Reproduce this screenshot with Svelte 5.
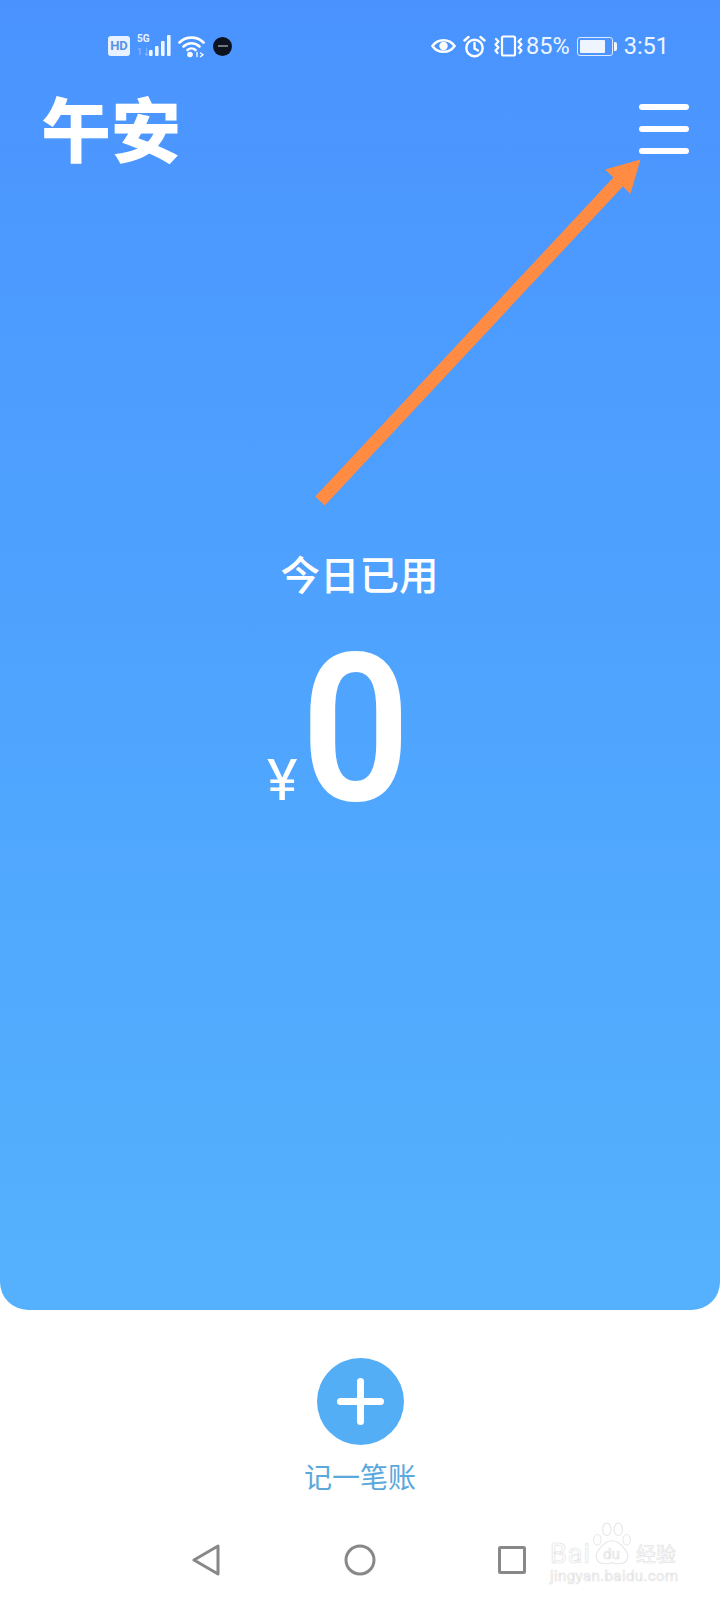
<script>
  const bars = [
    { x: 0, y: 15, h: 6 },
    { x: 6, y: 11, h: 10 },
    { x: 12, y: 6, h: 15 },
    { x: 18, y: 0, h: 21 }
  ];
</script>

<div class="page">
  <section class="hero">
    <div class="status">
      <div class="status-left">
        <span class="hd">HD</span>
        <div class="signal">
          <span class="net">5G</span>
          <span class="sim">1↓</span>
          <svg class="bars" width="22" height="21" viewBox="0 0 22 21">
            {#each bars as b}
              <rect x={b.x} y={b.y} width="3.6" height={b.h} rx="1" fill="#fff" opacity="0.92" />
            {/each}
          </svg>
        </div>
        <svg class="wifi" width="27" height="23" viewBox="0 0 27 23" fill="none" stroke="#fff" stroke-width="2.6" stroke-linecap="round">
          <path d="M1.500 7.500C8 1 19 1 25.500 7.500" />
          <path d="M5.500 11.500C10 7.200 17 7.200 21.500 11.500" />
          <path d="M9.500 15C11.800 13 15.200 13 17.500 15" />
          <circle cx="12" cy="19.500" r="2.800" fill="#fff" stroke="none" />
          <path d="M19 17.500v4M22.500 18l2.500 1.800-2.500 1.800" stroke-width="1.300" />
        </svg>
        <span class="dot"><i></i></span>
      </div>
      <div class="status-right">
        <svg class="eye" width="25" height="18" viewBox="0 0 26 18" fill="none" stroke="#fff" stroke-width="2.600">
          <path d="M1.500 9C7 1 19 1 24.500 9 19 17 7 17 1.500 9Z" />
          <circle cx="13" cy="9" r="4.400" fill="#fff" stroke="none" />
        </svg>
        <svg class="alarm" width="23" height="23" viewBox="0 0 23 23" fill="none" stroke="#fff" stroke-width="2.400" stroke-linecap="round">
          <circle cx="11.500" cy="13" r="8.200" />
          <path d="M11.500 8v5.500l3.500 2" />
          <path d="M1.500 5.500 5.500 2M21.500 5.500 17.500 2" />
        </svg>
        <svg class="vibrate" width="31" height="22" viewBox="0 0 31 22" fill="none" stroke="#fff" stroke-width="2.200" stroke-linecap="round" stroke-linejoin="round">
          <rect x="9" y="1.500" width="13" height="19" rx="1.500" />
          <path d="M3 4 5.500 6.500 2.500 9.500 5.500 12.500 2.500 15.500 4.500 18" />
          <path d="M28 4 25.500 6.500 28.500 9.500 25.500 12.500 28.500 15.500 26.500 18" />
        </svg>
        <span class="pct">85%</span>
        <span class="battery"><i></i></span>
        <span class="time">3:51</span>
      </div>
    </div>

    <header class="top">
      <h1>午安</h1>
      <div class="menu"><span></span><span></span><span></span></div>
    </header>

    <div class="today">
      <p>今日已用</p>
      <div class="amount">
        <span class="yen">¥</span>
        <span class="zero">0</span>
      </div>
    </div>

    <!-- annotation drawn on the screenshot -->
    <svg class="arrow" width="340" height="350" viewBox="0 0 340 350">
      <path d="M5 344 L304 24" stroke="#ff8c42" stroke-width="13" fill="none" />
      <path d="M324 4 L315 35 L292 13 Z" fill="#ff8c42" stroke="#ff8c42" stroke-width="2" />
    </svg>
  </section>

  <div class="add">
    <span class="plus"></span>
    <span class="add-label">记一笔账</span>
  </div>

  <nav class="nav">
    <svg width="28" height="32" viewBox="0 0 28 32" fill="none" stroke="#888" stroke-width="3" stroke-linejoin="round">
      <path d="M26 2 V30 L2 16 Z" />
    </svg>
    <svg width="32" height="32" viewBox="0 0 32 32" fill="none" stroke="#888" stroke-width="3">
      <circle cx="16" cy="16" r="14" />
    </svg>
    <svg width="28" height="28" viewBox="0 0 28 28" fill="none" stroke="#888" stroke-width="3" stroke-linejoin="round">
      <rect x="1.500" y="1.500" width="25" height="25" rx="1" />
    </svg>

    <div class="mark">
      <div class="mark-row">
        <span class="bai">Bai</span>
        <svg width="40" height="46" viewBox="0 0 38 44" fill="#fff" stroke="#e6e6e6" stroke-width="1">
          <ellipse cx="5" cy="17" rx="3.500" ry="5" />
          <ellipse cx="14" cy="7" rx="4" ry="6" />
          <ellipse cx="25" cy="7" rx="4" ry="6" />
          <ellipse cx="33" cy="17" rx="3.500" ry="5" />
          <path d="M19 18C12 18 3 28 4 34 5 40 12 41 19 39 26 41 33 40 34 34 35 28 26 18 19 18Z" />
        </svg>
        <span class="du">du</span>
        <span class="jy">经验</span>
      </div>
      <span class="url">jingyan.baidu.com</span>
    </div>
  </nav>
</div>

<style>
  :global(body) {
    margin: 0;
    background: #fff;
  }

  .page {
    width: 720px;
    height: 1600px;
    overflow: hidden;
    background: #fff;
    font-family: Roboto, "Noto Sans CJK SC", sans-serif;
  }

  .hero {
    position: relative;
    height: 1310px;
    box-sizing: border-box;
    padding-top: 33px;
    background: linear-gradient(180deg, #4a93ff 0%, #4fa5fe 55%, #55b1fd 100%);
    border-radius: 0 0 28px 28px;
    color: #fff;
  }

  .status {
    display: flex;
    justify-content: space-between;
    align-items: center;
    height: 26px;
    padding: 0 51px 0 108px;
  }

  .status-left,
  .status-right {
    display: flex;
    align-items: center;
  }

  .hd {
    width: 22px;
    height: 20px;
    border-radius: 3px;
    background: #e8f1ff;
    color: #5b93e6;
    font-size: 13px;
    font-weight: 700;
    line-height: 20px;
    text-align: center;
  }

  .signal {
    position: relative;
    width: 34px;
    height: 22px;
    margin-left: 7px;
  }

  .net {
    position: absolute;
    left: 0;
    top: -2px;
    font-size: 10px;
    font-weight: 700;
    color: #eaf2ff;
  }

  .sim {
    position: absolute;
    left: 0;
    top: 10px;
    font-size: 9px;
    color: #9dc4ff;
  }

  .bars {
    position: absolute;
    left: 12px;
    top: 0;
  }

  .wifi {
    margin-left: 7px;
  }

  .dot {
    display: flex;
    align-items: center;
    justify-content: center;
    width: 19px;
    height: 19px;
    margin-left: 8px;
    border-radius: 50%;
    background: #0c1220;
  }

  .dot i {
    width: 10px;
    height: 2px;
    background: #6d7a78;
  }

  .eye {
    margin-right: 7px;
  }

  .alarm {
    margin-right: 7px;
  }

  .vibrate {
    margin-right: 2px;
  }

  .pct,
  .time {
    font-size: 23.500px;
    line-height: 26px;
    color: #eef5ff;
  }

  .battery {
    position: relative;
    box-sizing: border-box;
    width: 36px;
    height: 19px;
    margin-left: 7px;
    padding: 2px;
    border: 1px solid #dfeaff;
    border-radius: 3px;
  }

  .battery i {
    display: block;
    width: 85%;
    height: 100%;
    border-radius: 1px;
    background: #eef5ff;
  }

  .battery::after {
    content: "";
    position: absolute;
    right: -5px;
    top: 4px;
    width: 3px;
    height: 9px;
    border-radius: 0 2px 2px 0;
    background: #eef5ff;
  }

  .time {
    margin-left: 11px;
  }

  .top {
    display: flex;
    justify-content: space-between;
    align-items: flex-start;
    padding: 26px 31px 0 41px;
  }

  h1 {
    margin: 0;
    font-family: "Noto Sans CJK SC", sans-serif;
    font-size: 70px;
    font-weight: 900;
    line-height: 84px;
  }

  .menu {
    display: flex;
    flex-direction: column;
    gap: 16.500px;
    width: 50px;
    padding-top: 19px;
  }

  .menu span {
    height: 5.500px;
    border-radius: 3px;
    background: #fff;
  }

  .today {
    display: flex;
    flex-direction: column;
    align-items: center;
    margin-top: 380px;
  }

  .today p {
    margin: 0 0 0 -1px;
    font-family: "Noto Sans CJK SC", sans-serif;
    font-size: 39.500px;
    font-weight: 500;
    line-height: 48px;
  }

  .amount {
    display: flex;
    align-items: baseline;
    margin: 48px 0 0 -38px;
  }

  .yen {
    font-size: 58px;
    font-weight: 400;
    line-height: 58px;
  }

  .zero {
    font-size: 206px;
    font-weight: 600;
    line-height: 170px;
    transform: scaleX(0.93);
  }

  .arrow {
    position: absolute;
    left: 315px;
    top: 157px;
  }

  .add {
    display: flex;
    flex-direction: column;
    align-items: center;
    padding-top: 48px;
  }

  .plus {
    position: relative;
    width: 87px;
    height: 87px;
    border-radius: 50%;
    background: #54aef6;
  }

  .plus::before,
  .plus::after {
    content: "";
    position: absolute;
    left: 20px;
    top: 40px;
    width: 47px;
    height: 7px;
    border-radius: 4px;
    background: #fff;
  }

  .plus::after {
    transform: rotate(90deg);
  }

  .add-label {
    margin-top: 13px;
    font-family: "Noto Sans CJK SC", sans-serif;
    font-size: 28px;
    line-height: 36px;
    color: #5aa8dc;
  }

  .nav {
    position: relative;
    display: flex;
    align-items: center;
    height: 34px;
    margin-top: 49px;
    padding-left: 192px;
  }

  .nav svg:nth-of-type(2) {
    margin-left: 124px;
  }

  .nav svg:nth-of-type(3) {
    margin-left: 122px;
  }

  .mark {
    position: absolute;
    left: 550px;
    top: -19px;
    display: flex;
    flex-direction: column;
    width: 128px;
    color: #fff;
    -webkit-text-stroke: 0.7px #e4e4e4;
  }

  .mark-row {
    position: relative;
    display: flex;
    align-items: flex-end;
    height: 44px;
  }

  .mark-row svg {
    margin: 0 !important;
    position: absolute;
    left: 42px;
    top: -2px;
  }

  .bai {
    font-size: 27px;
    line-height: 28px;
    letter-spacing: 1px;
  }

  .du {
    position: absolute;
    left: 53px;
    top: 22px;
    font-size: 15px;
    line-height: 16px;
  }

  .jy {
    position: absolute;
    right: 2px;
    top: 19px;
    font-family: "Noto Sans CJK SC", sans-serif;
    font-size: 20px;
    line-height: 22px;
  }

  .url {
    font-size: 15px;
    line-height: 16px;
    letter-spacing: 0.400px;
  }
</style>
